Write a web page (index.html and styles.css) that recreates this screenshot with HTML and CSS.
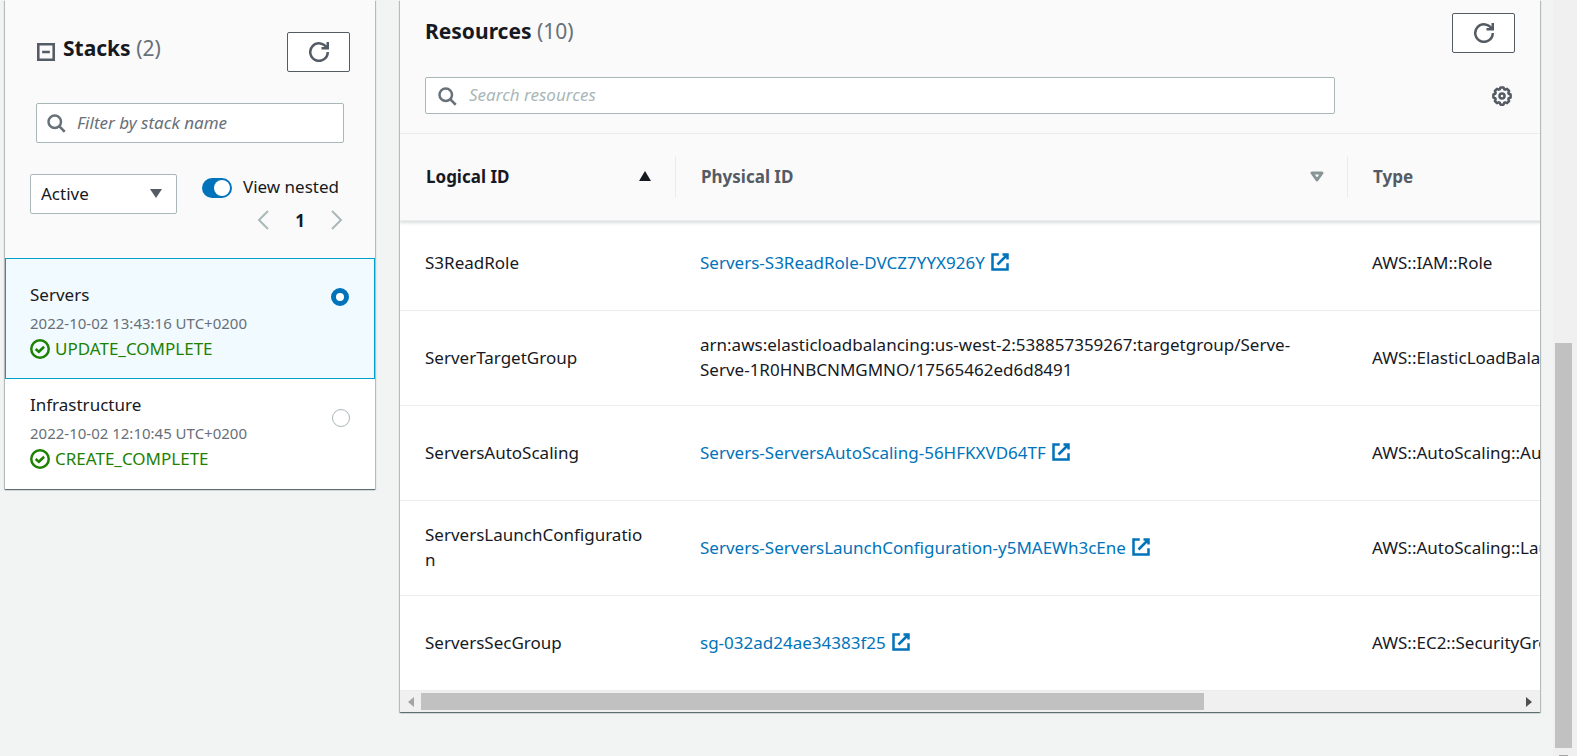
FILE: index.html
```html
<!DOCTYPE html>
<html lang="en">
<head>
<meta charset="utf-8">
<title>Stacks - Resources</title>
<link rel="stylesheet" href="styles.css">
</head>
<body>
<svg class="sprite" aria-hidden="true">
  <symbol id="refresh" viewBox="0 0 16 16"><path d="M10 5h5V0M15 8a7 7 0 1 1-.7-3"/></symbol>
  <symbol id="search" viewBox="0 0 16 16"><circle cx="7" cy="7" r="5"/><path d="m15 15-4.500-4.500"/></symbol>
  <symbol id="external" viewBox="0 0 16 16"><path d="M10 2h4v4M6 10l8-8M14 9v5H2V2h5"/></symbol>
  <symbol id="success" viewBox="0 0 16 16"><circle cx="8" cy="8" r="7"/><path d="m4.500 8 2.600 2.200 4.200-4"/></symbol>
  <symbol id="collapse" viewBox="1 1 14 14"><path d="M2 2h12v12H2zM5 8h6"/></symbol>
  <symbol id="previous" viewBox="0 0 16 20"><path d="M13 1 4 10l9 9"/></symbol>
  <symbol id="next" viewBox="0 0 16 20"><path d="m3 1 9 9-9 9"/></symbol>
  <symbol id="gear" viewBox="0 0 16 16"><path d="M14.900 6.800V9.200L13.400 9.800 13.100 10.600 13.700 12 12 13.700 10.600 13.100 9.800 13.400 9.200 14.900H6.800L6.200 13.400 5.400 13.100 4 13.700 2.300 12 2.900 10.600 2.600 9.800 1.100 9.200V6.800L2.600 6.200 2.900 5.400 2.300 4 4 2.300 5.400 2.900 6.200 2.600 6.800 1.100H9.200L9.800 2.600 10.600 2.900 12 2.300 13.700 4 13.100 5.400 13.400 6.200z"/><circle cx="8" cy="8" r="2"/></symbol>
</svg>
<div class="page">
  <aside class="panel stacks">
    <header class="stacks-header">
      <div class="stacks-title">
        <button class="plain" type="button" aria-label="Collapse stacks"><svg class="icon collapse"><use href="#collapse"/></svg></button>
        <h2>Stacks <span class="count">(2)</span></h2>
        <button class="refresh" type="button" aria-label="Refresh stacks"><svg class="icon"><use href="#refresh"/></svg></button>
      </div>
      <label class="search stack-search"><svg class="icon"><use href="#search"/></svg><input type="text" aria-label="Filter by stack name" placeholder="Filter by stack name"></label>
      <div class="filters">
        <div class="select"><select aria-label="Stack status"><option>Active</option><option>Deleted</option></select><svg class="caret" viewBox="0 0 14 11"><path d="M1 1h12L7 10z"/></svg></div>
        <div class="filter-options">
          <label class="toggle"><input type="checkbox" role="switch" checked><span>View nested</span></label>
          <nav class="pagination" aria-label="Stack pages">
            <button class="plain" type="button" aria-label="Previous page"><svg class="chevron"><use href="#previous"/></svg></button>
            <b>1</b>
            <button class="plain" type="button" aria-label="Next page"><svg class="chevron"><use href="#next"/></svg></button>
          </nav>
        </div>
      </div>
    </header>
    <label class="stack selected">
      <span class="stack-text">
        <span>Servers</span>
        <span class="date">2022-10-02 13:43:16 UTC+0200</span>
        <span class="status"><svg class="icon"><use href="#success"/></svg>UPDATE_COMPLETE</span>
      </span>
      <input type="radio" name="stack" checked>
    </label>
    <label class="stack">
      <span class="stack-text">
        <span>Infrastructure</span>
        <span class="date">2022-10-02 12:10:45 UTC+0200</span>
        <span class="status"><svg class="icon"><use href="#success"/></svg>CREATE_COMPLETE</span>
      </span>
      <input type="radio" name="stack">
    </label>
  </aside>
  <main class="panel resources">
    <header class="resources-header">
      <div class="resources-title">
        <h2>Resources <span class="count">(10)</span></h2>
        <button class="refresh" type="button" aria-label="Refresh resources"><svg class="icon"><use href="#refresh"/></svg></button>
      </div>
      <div class="toolbar">
        <label class="search resource-search"><svg class="icon"><use href="#search"/></svg><input type="text" aria-label="Search resources" placeholder="Search resources"></label>
        <button class="plain" type="button" aria-label="Preferences"><svg class="icon gear"><use href="#gear"/></svg></button>
      </div>
    </header>
    <div class="table-view">
      <table>
        <colgroup><col class="logical"><col class="physical"><col class="type"></colgroup>
        <thead>
          <tr>
            <th class="sorted" scope="col"><div>Logical ID<svg class="sort" viewBox="0 0 14 11"><path d="M7 0l6 10H1z"/></svg></div></th>
            <th scope="col"><div>Physical ID<svg class="sort open" viewBox="0 0 14 11"><path d="M2 2h10L7 9z"/></svg></div></th>
            <th scope="col"><div>Type</div></th>
          </tr>
        </thead>
        <tbody>
          <tr><td>S3ReadRole</td><td><a href="#">Servers-S3ReadRole-DVCZ7YYX926Y<svg class="icon"><use href="#external"/></svg></a></td><td>AWS::IAM::Role</td></tr>
          <tr><td>ServerTargetGroup</td><td>arn:aws:elasticloadbalancing:us-west-2:538857359267:targetgroup/Serve-<wbr>Serve-1R0HNBCNMGMNO/17565462ed6d8491</td><td>AWS::ElasticLoadBalancingV2::TargetGroup</td></tr>
          <tr><td>ServersAutoScaling</td><td><a href="#">Servers-ServersAutoScaling-56HFKXVD64TF<svg class="icon"><use href="#external"/></svg></a></td><td>AWS::AutoScaling::AutoScalingGroup</td></tr>
          <tr><td>ServersLaunchConfiguration</td><td><a href="#">Servers-ServersLaunchConfiguration-y5MAEWh3cEne<svg class="icon"><use href="#external"/></svg></a></td><td>AWS::AutoScaling::LaunchConfiguration</td></tr>
          <tr><td>ServersSecGroup</td><td><a href="#">sg-032ad24ae34383f25<svg class="icon"><use href="#external"/></svg></a></td><td>AWS::EC2::SecurityGroup</td></tr>
        </tbody>
      </table>
    </div>
    <div class="hscroll" aria-hidden="true">
      <svg class="arrow" viewBox="0 0 6 10"><path d="M6 0v10L0 5z"/></svg>
      <div class="track"><div class="thumb"></div></div>
      <svg class="arrow end" viewBox="0 0 6 10"><path d="M0 0v10l6-5z"/></svg>
    </div>
  </main>
  <div class="vscroll" aria-hidden="true"><div class="thumb"></div><div class="arrow-down"></div></div>
</div>
</body>
</html>
```
FILE: styles.css
```css
* { box-sizing: border-box; }
body {
  margin: 0;
  background: #f2f3f3;
  color: #16191f;
  font: 17px/25px "Noto Sans", "Open Sans", sans-serif;
}
.sprite { position: absolute; width: 0; height: 0; }
symbol, .icon, .chevron { fill: none; stroke: currentColor; }
.icon { width: 20px; height: 20px; stroke-width: 2; flex: none; display: block; }
button, input, select { font: inherit; color: inherit; }
button { cursor: pointer; }
h2 { margin: 0; font-size: 21px; line-height: 32px; font-weight: 700; }
.count { font-weight: 400; color: #687078; }
.plain { border: 0; padding: 0; background: none; color: #545b64; display: flex; }

.page {
  min-height: 100vh;
  display: grid;
  grid-template-columns: 370px minmax(0, 1fr) 24px;
  padding-left: 5px;
}
.panel {
  align-self: start;
  background: #fff;
  box-shadow: 0 1px 1px 0 rgba(0, 28, 36, .4), 1px 1px 1px 0 rgba(0, 28, 36, .2), -1px 1px 1px 0 rgba(0, 28, 36, .2);
}
.resources { margin: 0 13px 0 25px; }

.refresh {
  width: 63px;
  height: 40px;
  display: flex;
  align-items: center;
  justify-content: center;
  border: 1px solid #545b64;
  border-radius: 2px;
  background: #fff;
  color: #545b64;
}
.search {
  display: flex;
  align-items: center;
  border: 1px solid #aab7b8;
  border-radius: 2px;
  background: #fff;
  color: #687078;
}
.search input { flex: 1; min-width: 0; border: 0; padding: 0 0 2px; background: none; outline: 0; }
.search input::placeholder { font-style: italic; color: #687078; opacity: 1; }

.stacks-header { height: 258px; padding: 32px 25px 0; background: #fafafa; }
.stacks-title { display: flex; padding-left: 7px; }
.stacks-title h2 { margin-left: 8px; flex: 1; }
.stacks-title .plain { align-items: center; }
.collapse { width: 18px; height: 18px; }
.stack-search { height: 40px; margin: 31px 6px; padding: 0 9px; gap: 11px; }
.filters { display: flex; gap: 25px; }
.select { position: relative; width: 147px; }
.select select {
  width: 100%;
  height: 40px;
  padding: 0 10px 2px;
  appearance: none;
  border: 1px solid #aab7b8;
  border-radius: 2px;
  background: #fff;
}
.caret { position: absolute; right: 14px; top: 14px; width: 14px; height: 11px; fill: #545b64; pointer-events: none; }
.filter-options { flex: 1; }
.toggle { display: flex; align-items: center; gap: 11px; white-space: nowrap; }
.toggle input {
  appearance: none;
  width: 30px;
  height: 20px;
  margin: 2px 0 0;
  padding: 2px;
  border-radius: 10px;
  background: #0073bb;
  display: flex;
  justify-content: flex-end;
}
.toggle input::before { content: ""; width: 16px; height: 16px; border-radius: 50%; background: #fff; }
.pagination { display: flex; justify-content: flex-end; align-items: center; gap: 24px; height: 42px; padding-right: 5px; }
.pagination .plain { color: #aab7b8; }
.chevron { width: 16px; height: 20px; stroke-width: 2; }

.stack { display: flex; justify-content: space-between; padding: 14px 25px 18px; line-height: 24px; }
.stack.selected { padding: 24px 24px 17px; border: 1px solid #00a1c9; background: #f1faff; }
.stack-text { display: grid; }
.date { margin: 4px 0 2px; font-size: 15px; color: #687078; }
.status { display: flex; align-items: center; gap: 5px; color: #1d8102; }
.stack input { appearance: none; width: 18px; height: 18px; margin: 16px 0 0; border: 1px solid #aab7b8; border-radius: 50%; background: #fff; }
.stack input:checked { margin: 5px 1px 0; border: 5px solid #0073bb; }

.resources-header { padding: 13px 25px 19px; background: #fafafa; border-bottom: 1px solid #eaeded; }
.resources-title { display: flex; justify-content: space-between; margin-bottom: 24px; }
.resources-title h2 { line-height: 36px; }
.toolbar { display: flex; align-items: center; justify-content: space-between; padding-right: 3px; }
.resource-search { width: calc(100% - 177px); height: 37px; padding: 0 11px; gap: 12px; }
.resource-search input::placeholder { color: #aab7b8; }
.gear { stroke-linejoin: round; }

.table-view { overflow: hidden; }
table { width: 100%; min-width: 1560px; table-layout: fixed; border-collapse: separate; border-spacing: 0; }
.logical { width: 276px; }
.physical { width: 672px; }
thead { box-shadow: 0 2px 3px rgba(0, 28, 36, .15); }
th { height: 87px; padding: 0; text-align: left; background: #fafafa; border-bottom: 1px solid #eaeded; color: #545b64; }
th div { display: flex; align-items: center; justify-content: space-between; height: 42px; padding: 0 23px 2px 26px; border-right: 1px solid #eaeded; }
th + th div { padding-left: 25px; }
th.sorted { color: #16191f; }
.sort { width: 14px; height: 11px; fill: currentColor; }
.sort.open { fill: none; stroke: #879596; stroke-width: 3; stroke-linejoin: round; }
td { height: 95px; padding: 0 24px 2px; border-bottom: 1px solid #eaeded; overflow-wrap: break-word; }
td:first-child { padding: 0 26px 2px 25px; }
tbody tr:first-child td { height: 90px; padding-bottom: 7px; }
a { display: inline-flex; align-items: center; gap: 5px; color: #0073bb; text-decoration: none; }

.hscroll { height: 21px; display: flex; align-items: center; padding: 0 8px; background: #f0f0f0; }
.hscroll .track { flex: 1; margin: 0 7px; }
.hscroll .thumb { width: 71.300%; height: 17px; background: #c1c1c1; }
.arrow { width: 6px; height: 10px; fill: #a3a3a3; }
.arrow.end { fill: #505050; }
.vscroll { height: 100vh; display: flex; flex-direction: column; justify-content: flex-end; padding: 0 5px 0 2px; background: #f0f0f0; }
.vscroll .thumb { height: 53.600%; background: #c1c1c1; }
.arrow-down { height: 8px; width: 9px; margin: 0 4px; border-bottom: 1px solid #a3a3a3; }
```
